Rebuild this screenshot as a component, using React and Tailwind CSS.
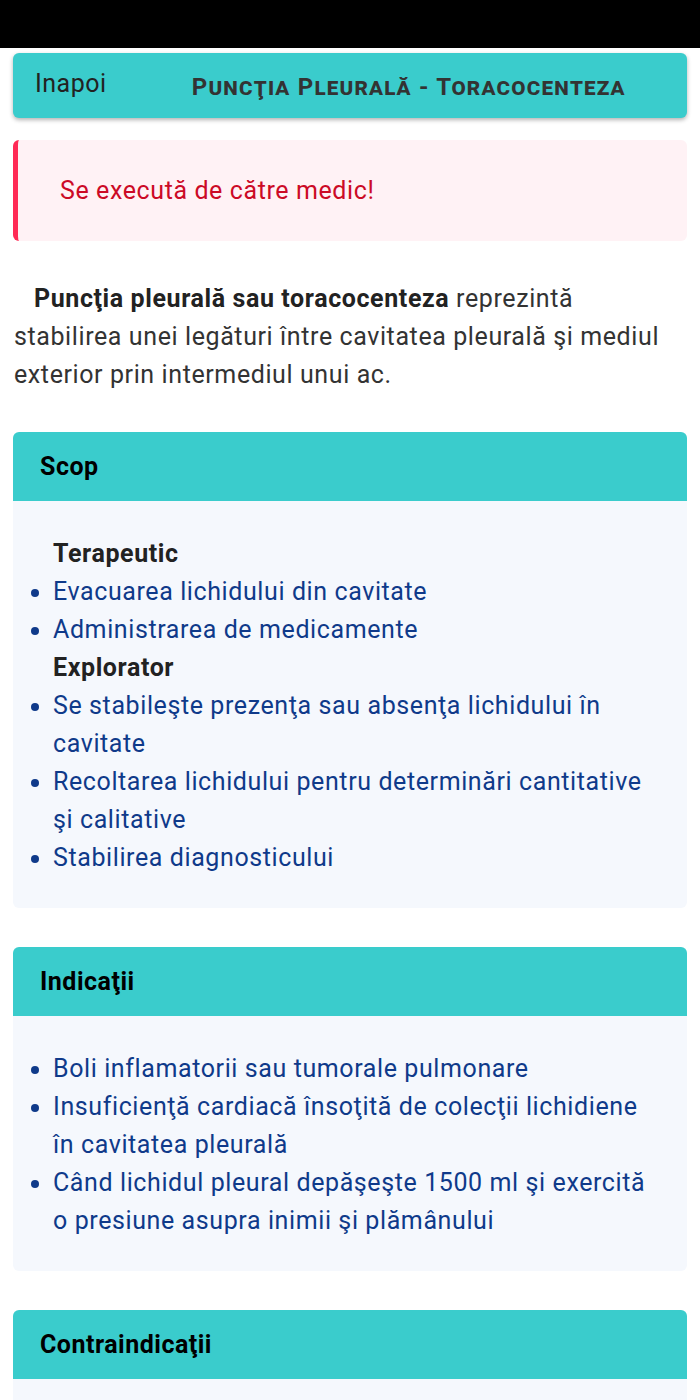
import React from "react";

const scop = [
  { head: "Terapeutic" },
  { item: "Evacuarea lichidului din cavitate" },
  { item: "Administrarea de medicamente" },
  { head: "Explorator" },
  { item: "Se stabileşte prezenţa sau absenţa lichidului în cavitate" },
  { item: "Recoltarea lichidului pentru determinări cantitative şi calitative" },
  { item: "Stabilirea diagnosticului" },
];

const indicatii = [
  { item: "Boli inflamatorii sau tumorale pulmonare" },
  { item: "Insuficienţă cardiacă însoţită de colecţii lichidiene în cavitatea pleurală" },
  { item: "Când lichidul pleural depăşeşte 1500 ml şi exercită o presiune asupra inimii şi plămânului" },
];

function Card({ title, rows }) {
  return (
    <div className="rounded-md overflow-hidden">
      <div className="bg-[#3acccc] h-[69px] flex items-center px-[27px]">
        <h3 className="text-[25px] tracking-[0.5px] font-bold text-black">{title}</h3>
      </div>
      {rows && (
        <div className="bg-[#f5f8fd] pt-[34px] pb-[31px] pr-[40px]">
          <ul className="pl-[40px] text-[25px] tracking-[0.6px] leading-[38px]">
            {rows.map((r, i) =>
              r.head ? (
                <li key={i} className="list-none font-bold text-[#222]">
                  {r.head}
                </li>
              ) : (
                <li key={i} className="list-disc text-[#0f3a8a] marker:text-[#0f3a8a]">
                  {r.item}
                </li>
              )
            )}
          </ul>
        </div>
      )}
    </div>
  );
}

export default function App() {
  return (
    <div className="w-[700px] h-[1400px] overflow-hidden bg-white font-['Roboto',sans-serif]">
      {/* status bar */}
      <div className="h-[48px] bg-black" />

      <div className="px-[13px] pt-[5px] flex flex-col">
        {/* header */}
        <div className="bg-[#3acccc] h-[65px] rounded-md shadow-[0_2px_4px_rgba(0,0,0,0.3)] flex items-start">
          <button className="pl-[22px] pr-[20px] pt-[12px] text-[25px] tracking-[0.5px] text-[#222]">Inapoi</button>
          <h1 className="flex-1 text-center pt-[16px] pl-[4px] text-[24px] font-bold text-[#333] [font-variant:small-caps] tracking-[1.2px]">
            Puncţia Pleurală - Toracocenteza
          </h1>
        </div>

        {/* alert */}
        <div className="mt-[22px] h-[101px] bg-[#fff2f5] border-l-[5px] border-[#ff2a55] rounded-md flex items-center pl-[42px]">
          <p className="text-[25px] tracking-[0.6px] text-[#cc0a26]">Se execută de către medic!</p>
        </div>

        {/* intro */}
        <p className="mt-[39px] pr-[10px] text-[25px] tracking-[0.6px] leading-[38px] text-[#333] indent-[20px] pl-[1px]">
          <b className="text-[#222]">Puncţia pleurală sau toracocenteza</b> reprezintă stabilirea unei legături
          între cavitatea pleurală şi mediul exterior prin intermediul unui ac.
        </p>

        <div className="mt-[38px] flex flex-col gap-[39px]">
          <Card title="Scop" rows={scop} />
          <Card title="Indicaţii" rows={indicatii} />
          <Card title="Contraindicaţii" rows={[{ item: "" }]} />
        </div>
      </div>
    </div>
  );
}
